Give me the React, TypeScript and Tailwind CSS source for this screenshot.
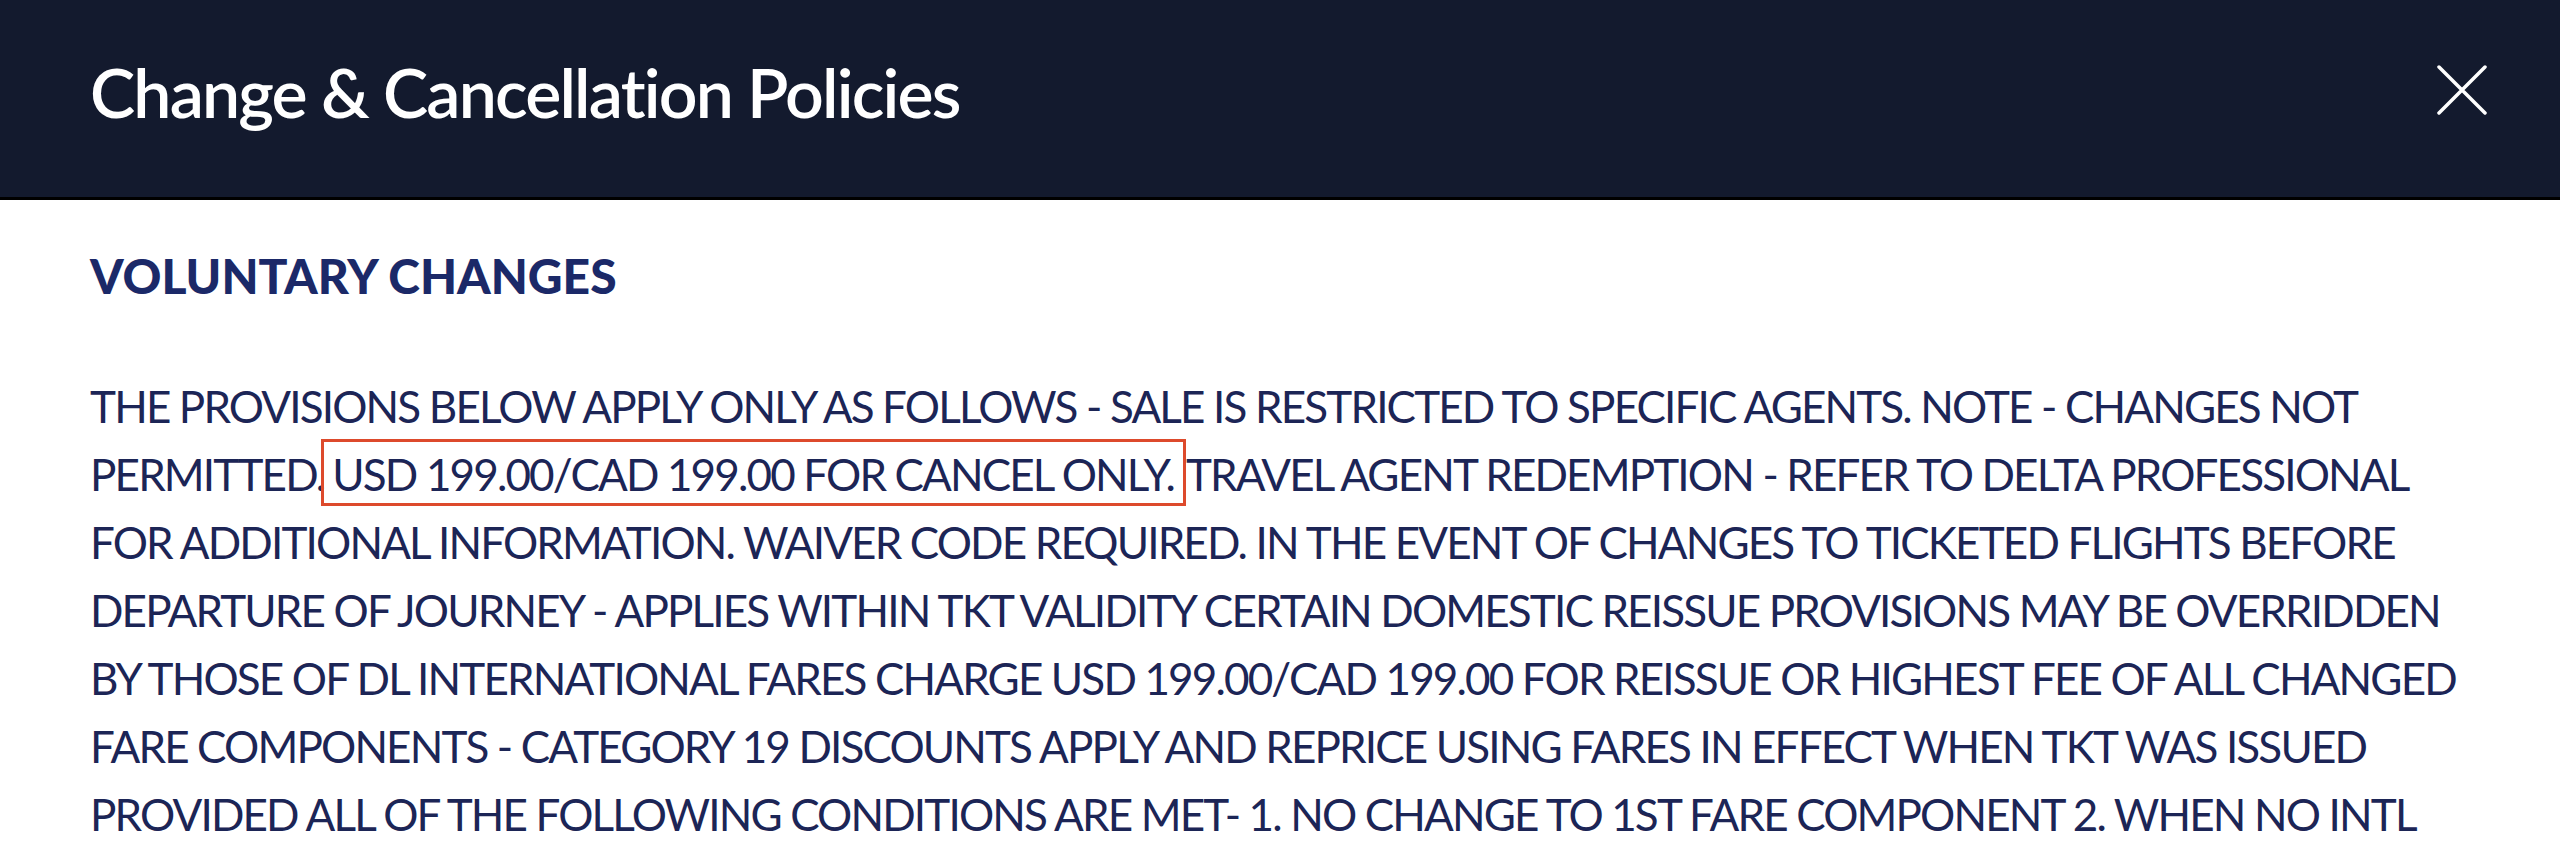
const LINES_BEFORE = [
  "THE PROVISIONS BELOW APPLY ONLY AS FOLLOWS - SALE IS RESTRICTED TO SPECIFIC AGENTS. NOTE - CHANGES NOT",
];

const LINES_AFTER = [
  "FOR ADDITIONAL INFORMATION. WAIVER CODE REQUIRED. IN THE EVENT OF CHANGES TO TICKETED FLIGHTS BEFORE",
  "DEPARTURE OF JOURNEY - APPLIES WITHIN TKT VALIDITY CERTAIN DOMESTIC REISSUE PROVISIONS MAY BE OVERRIDDEN",
  "BY THOSE OF DL INTERNATIONAL FARES CHARGE USD 199.00/CAD 199.00 FOR REISSUE OR HIGHEST FEE OF ALL CHANGED",
  "FARE COMPONENTS - CATEGORY 19 DISCOUNTS APPLY AND REPRICE USING FARES IN EFFECT WHEN TKT WAS ISSUED",
  "PROVIDED ALL OF THE FOLLOWING CONDITIONS ARE MET- 1. NO CHANGE TO 1ST FARE COMPONENT 2. WHEN NO INTL",
];

function CloseIcon() {
  return (
    <svg width="50" height="50" viewBox="0 0 50 50" fill="none">
      <path
        d="M2 2L48 48M48 2L2 48"
        stroke="currentColor"
        strokeWidth="3.5"
        strokeLinecap="round"
      />
    </svg>
  );
}

export default function App() {
  return (
    <div className="h-[846px] w-full overflow-hidden bg-white font-['Lato',sans-serif]">
      <header className="flex h-[200px] items-center justify-between border-b-[3px] border-black bg-[#131a2e] pb-[14px] pl-[90px] pr-[73px]">
        <h1 className="text-[68px] font-semibold leading-none tracking-[-0.027em] text-white">
          Change &amp; Cancellation Policies
        </h1>
        <button className="-mt-[4px] flex items-center justify-center text-white">
          <CloseIcon />
        </button>
      </header>

      <section className="px-[90px] pt-[52px]">
        <h2 className="text-[48px] font-black leading-none text-[#1b2968]">
          VOLUNTARY CHANGES
        </h2>

        <div className="mt-[72px] whitespace-nowrap text-[44px] leading-[68px] tracking-[-0.042em] text-[#1c2556]">
          {LINES_BEFORE.map((line) => (
            <div key={line}>{line}</div>
          ))}
          <div>
            PERMITTED.
            <span className="-ml-[3px] border-[3px] border-[#dd4a2c] pb-[3px] pl-[8px] pr-[9px] pt-[6px]">
              USD 199.00/CAD 199.00 FOR CANCEL ONLY.
            </span>
            TRAVEL AGENT REDEMPTION - REFER TO DELTA PROFESSIONAL
          </div>
          {LINES_AFTER.map((line) => (
            <div key={line}>{line}</div>
          ))}
        </div>
      </section>
    </div>
  );
}
